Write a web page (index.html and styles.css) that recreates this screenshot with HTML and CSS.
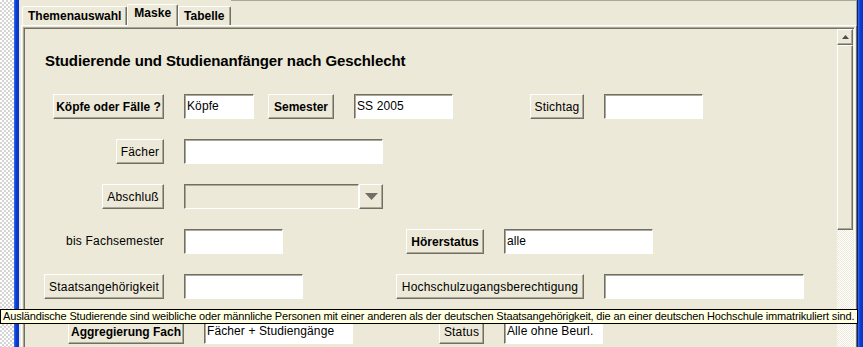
FILE: index.html
```html
<!DOCTYPE html>
<html lang="de">
<head>
  <meta charset="UTF-8">
  <title>Maske</title>
  <link rel="stylesheet" href="styles.css">
</head>
<body>
  <div class="desktop"></div>
  <div class="frame frame-left"></div>

  <div class="window">
    <!-- Reiter -->
    <div class="tabbar">
      <div class="tab">Themenauswahl</div>
      <div class="tab active">Maske</div>
      <div class="tab">Tabelle</div>
      <div class="tab-rest"></div>
    </div>

    <div class="tabpanel">
      <div class="scrollpane">
        <div class="viewport">
          <p class="form-title">Studierende und Studienanfänger nach Geschlecht</p>

          <div class="rows">
            <div class="row">
              <div class="lead"><button class="btn bold w-111">Köpfe oder Fälle ?</button></div>
              <div class="field w-70">Köpfe</div>
              <button class="btn bold w-66 ml-14">Semester</button>
              <div class="field w-99 ml-20">SS 2005</div>
              <button class="btn w-54 ml-77">Stichtag</button>
              <div class="field w-99 ml-20"></div>
            </div>

            <div class="row">
              <div class="lead"><button class="btn w-48">Fächer</button></div>
              <div class="field w-199"></div>
            </div>

            <div class="row">
              <div class="lead"><button class="btn w-62">Abschluß</button></div>
              <div class="combo">
                <div class="field disabled w-175"></div>
                <div class="combo-btn">
                  <svg width="13" height="7" viewBox="0 0 13 7"><path d="M0 0h13L6.5 7z" fill="#716f64"/></svg>
                </div>
              </div>
            </div>

            <div class="row">
              <div class="lead"><span class="label">bis Fachsemester</span></div>
              <div class="field w-99"></div>
              <button class="btn bold w-78 ml-123">Hörerstatus</button>
              <div class="field w-149 ml-20">alle</div>
            </div>

            <div class="row">
              <div class="lead"><button class="btn w-120">Staatsangehörigkeit</button></div>
              <div class="field w-119"></div>
              <button class="btn w-188 ml-93">Hochschulzugangsberechtigung</button>
              <div class="field w-200 ml-20"></div>
            </div>

            <div class="row wide">
              <div class="lead"><button class="btn bold w-116">Aggregierung Fach</button></div>
              <div class="field w-149">Fächer + Studiengänge</div>
              <button class="btn w-45 ml-86">Status</button>
              <div class="field w-99 ml-20">Alle ohne Beurl.</div>
            </div>
          </div>
        </div>

        <!-- Rollbalken -->
        <div class="scrollbar">
          <div class="sb-btn">
            <svg width="7" height="4" viewBox="0 0 7 4"><path d="M3.5 0L7 4H0z" fill="#4d4d4d"/></svg>
          </div>
          <div class="sb-thumb"></div>
          <div class="sb-track"></div>
        </div>
      </div>
    </div>
  </div>

  <div class="frame frame-right"></div>

  <div class="tooltip">Ausländische Studierende sind weibliche oder männliche Personen mit einer anderen als der deutschen Staatsangehörigkeit, die an einer deutschen Hochschule immatrikuliert sind.</div>
</body>
</html>
```

FILE: styles.css
```css
/* Grundlayout */
* {
  box-sizing: border-box;
}
body {
  margin: 0;
  height: 347px;
  overflow: hidden;
  display: flex;
  font-family: "Liberation Sans", Arial, sans-serif;
  font-size: 12px;
  color: #000;
  background: #ece9d8;
}
.desktop {
  width: 14px;
  flex: none;
  background: repeating-conic-gradient(#d4d4d4 0 25%, #fff 0 50%) 0 0 / 4px 4px;
}
.frame {
  flex: none;
  background: linear-gradient(to right, #3a6ee8, #0b3ed8 40%, #0a32c0);
}
.frame-left {
  width: 5px;
}
.frame-right {
  width: 6px;
  border-left: 1px solid #0a246a;
}
.window {
  flex: 1;
  display: flex;
  flex-direction: column;
  padding-left: 2px;
  background: #ece9d8;
}

/* Reiter */
.tabbar {
  display: flex;
  align-items: flex-end;
  height: 25px;
  padding-left: 1px;
  flex: none;
}
.tab {
  height: 19px;
  padding: 0 5px;
  font-weight: bold;
  line-height: 18px;
  background: #ece9d8;
  border-top: 1px solid #fff;
  border-left: 1px solid #fff;
  border-right: 1px solid #716f64;
  border-radius: 2px 2px 0 0;
  box-shadow: inset -1px 0 0 #aca899;
}
.tab.active {
  position: relative;
  z-index: 1;
  height: 22px;
  margin-bottom: -1px;
  padding: 0 6px;
  line-height: 17px;
}
.tab-rest {
  flex: 1;
  height: 25px;
  padding-top: 1px;
  border-top: 1px solid #aca899;
  border-right: 1px solid #aca899;
}

/* Reiterinhalt */
.tabpanel {
  flex: 1;
  border-top: 1px solid #fff;
  border-left: 1px solid #fff;
  border-right: 1px solid #716f64;
  padding: 1px 1px 0 1px;
  min-height: 0;
}
.scrollpane {
  height: 100%;
  display: flex;
  border-top: 1px solid #aca899;
  border-left: 1px solid #aca899;
  border-right: 1px solid #fff;
  box-shadow: inset 1px 1px 0 #716f64, inset -1px 0 0 #f1efe2;
  padding: 1px 1px 0 1px;
}
.viewport {
  flex: 1;
  padding: 23px 0 0 0;
  overflow: hidden;
}
.form-title {
  margin: 0 0 0 20px;
  font-size: 15px;
  font-weight: bold;
  letter-spacing: -0.1px;
  line-height: 17px;
}

/* Formularzeilen */
.rows {
  display: flex;
  flex-direction: column;
  gap: 20px;
  margin-top: 25px;
}
.row {
  display: flex;
  align-items: center;
  height: 25px;
}
.lead {
  width: 139px;
  flex: none;
  display: flex;
  justify-content: flex-end;
  margin-right: 20px;
}
.row.wide .lead {
  width: 159px;
}
.label {
  line-height: 25px;
  letter-spacing: 0.2px;
}
.btn {
  height: 25px;
  flex: none;
  padding: 0;
  font: inherit;
  letter-spacing: 0.2px;
  text-align: center;
  color: #000;
  background: #ece9d8;
  border: 1px solid;
  border-color: #fff #716f64 #716f64 #fff;
  box-shadow: inset -1px -1px 0 #aca899;
}
.btn.bold {
  font-weight: bold;
  letter-spacing: 0;
}
.field {
  height: 25px;
  flex: none;
  padding: 0 2px;
  line-height: 23px;
  letter-spacing: 0.1px;
  white-space: nowrap;
  overflow: hidden;
  background: #fff;
  border: 1px solid;
  border-color: #716f64 #fff #fff #716f64;
  box-shadow: inset 1px 1px 0 #aca899;
}
.field.disabled {
  background: #ece9d8;
}
.combo {
  display: flex;
}
.combo-btn {
  width: 24px;
  height: 25px;
  display: flex;
  align-items: center;
  justify-content: center;
  background: #ece9d8;
  border: 1px solid;
  border-color: #fff #716f64 #716f64 #fff;
  box-shadow: inset -1px -1px 0 #aca899;
}

/* Breiten und Abstände */
.w-45 { width: 45px; }
.w-48 { width: 48px; }
.w-54 { width: 54px; }
.w-62 { width: 62px; }
.w-66 { width: 66px; }
.w-70 { width: 70px; }
.w-78 { width: 78px; }
.w-99 { width: 99px; }
.w-111 { width: 111px; }
.w-116 { width: 116px; }
.w-119 { width: 119px; }
.w-120 { width: 120px; }
.w-149 { width: 149px; }
.w-175 { width: 175px; }
.w-188 { width: 188px; }
.w-199 { width: 199px; }
.w-200 { width: 200px; }
.ml-14 { margin-left: 14px; }
.ml-20 { margin-left: 20px; }
.ml-77 { margin-left: 77px; }
.ml-86 { margin-left: 86px; }
.ml-93 { margin-left: 93px; }
.ml-123 { margin-left: 123px; }

/* Rollbalken */
.scrollbar {
  width: 16px;
  flex: none;
  display: flex;
  flex-direction: column;
}
.sb-btn,
.sb-thumb {
  background: #ece9d8;
  border: 1px solid;
  border-color: #fff #716f64 #716f64 #fff;
  box-shadow: inset -1px -1px 0 #aca899;
}
.sb-btn {
  height: 16px;
  display: flex;
  align-items: center;
  justify-content: center;
}
.sb-thumb {
  height: 185px;
}
.sb-track {
  flex: 1;
  background: repeating-conic-gradient(#ece9d8 0 25%, #fff 0 50%) 0 0 / 2px 2px;
}

/* Tooltip liegt über dem Inhalt */
.tooltip {
  position: absolute;
  left: 0;
  top: 309px;
  width: 858px;
  height: 15px;
  padding: 0 2px;
  font-size: 11px;
  letter-spacing: -0.16px;
  line-height: 13px;
  white-space: nowrap;
  overflow: hidden;
  background: #ffffe1;
  border: 1px solid #000;
}
```
